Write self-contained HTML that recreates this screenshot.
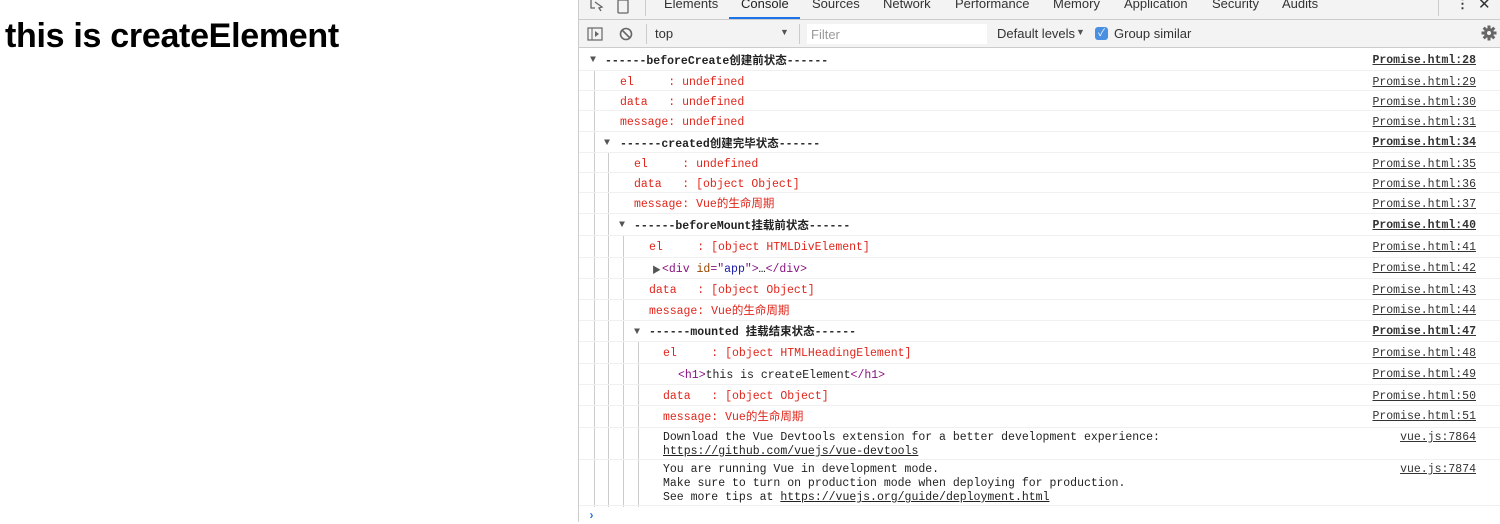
<!DOCTYPE html>
<html><head><meta charset="utf-8"><style>
*{margin:0;padding:0;box-sizing:border-box}
body{width:1500px;height:522px;overflow:hidden;background:#fff;position:relative;font-family:"Liberation Sans","Noto Sans CJK SC",sans-serif}
h1{position:absolute;left:5px;top:17px;font-size:34px;font-weight:bold;color:#000;letter-spacing:-0.3px}
#dt{position:absolute;left:578px;top:0;width:922px;height:522px;border-left:1px solid #ccc;background:#fff}
.tabs{position:absolute;left:0;top:0;width:922px;height:20px;background:#f3f3f3;border-bottom:1px solid #ccc}
.tab{position:absolute;top:-4px;font-size:13px;color:#333}
.tb{position:absolute;left:0;top:20px;width:922px;height:28px;background:#f3f3f3;border-bottom:1px solid #ccc;font-size:13px;color:#333}
.m{font-family:"Liberation Mono","Noto Sans CJK SC",monospace;font-size:11.5px}
.row{position:absolute;left:0;width:922px;border-bottom:1px solid #f0f0f0}
.t{position:absolute;white-space:pre;line-height:14px;margin-top:1px}
.r{color:#e0251b}
.b{font-weight:bold;color:#222}
.k{color:#222}
.lnk{position:absolute;right:25px;color:#333;text-decoration:underline;white-space:pre;line-height:14px;margin-top:1px}
.ar{position:absolute;font-size:10px;color:#555}
.g{position:absolute;width:1px;background:#ccc}
.tag{color:#881280}.at{color:#994500}.av{color:#1a1aa6}
</style></head><body>
<h1>this is createElement</h1>
<div id="dt">
<div class="tabs">
 <svg style="position:absolute;left:10px;top:-4px" width="16" height="16"><path d="M2 2v10h4M6 6l7 5-3 1 2 3" stroke="#666" fill="none" stroke-width="1.3"/></svg>
 <svg style="position:absolute;left:37px;top:-4px" width="14" height="18"><rect x="2" y="4" width="10" height="13" rx="1" stroke="#666" fill="none" stroke-width="1.3"/></svg>
 <div style="position:absolute;left:66px;top:0;width:1px;height:16px;background:#ccc"></div>
 <span class="tab" style="left:85px">Elements</span>
 <span class="tab" style="left:162px;color:#222">Console</span>
 <div style="position:absolute;left:150px;top:17px;width:71px;height:2px;background:#1a73e8"></div>
 <span class="tab" style="left:233px">Sources</span>
 <span class="tab" style="left:304px">Network</span>
 <span class="tab" style="left:376px">Performance</span>
 <span class="tab" style="left:474px">Memory</span>
 <span class="tab" style="left:545px">Application</span>
 <span class="tab" style="left:633px">Security</span>
 <span class="tab" style="left:703px">Audits</span>
 <div style="position:absolute;left:859px;top:0;width:1px;height:16px;background:#ccc"></div>
 <span class="tab" style="left:877px;font-weight:bold">⋮</span>
 <span class="tab" style="left:899px;font-size:15px;top:-5px">✕</span>
</div>
<div class="tb">
 <svg style="position:absolute;left:8px;top:7px" width="16" height="14"><rect x="1" y="1" width="14" height="12" stroke="#666" fill="none" stroke-width="1.2"/><path d="M5 1v12" stroke="#666"/><path d="M8 4l4 3-4 3z" fill="#666"/></svg>
 <svg style="position:absolute;left:40px;top:7px" width="14" height="14"><circle cx="7" cy="7" r="5.5" stroke="#666" fill="none" stroke-width="1.6"/><path d="M3 3l8 8" stroke="#666" stroke-width="1.6"/></svg>
 <div style="position:absolute;left:67px;top:4px;width:1px;height:20px;background:#ccc"></div>
 <span style="position:absolute;left:76px;top:6px">top</span>
 <span style="position:absolute;left:201px;top:7px;font-size:9px;color:#555">▼</span>
 <div style="position:absolute;left:220px;top:4px;width:1px;height:20px;background:#ccc"></div>
 <div style="position:absolute;left:228px;top:4px;width:180px;height:20px;background:#fff"></div>
 <span style="position:absolute;left:232px;top:7px;color:#999">Filter</span>
 <span style="position:absolute;left:418px;top:6px">Default levels</span>
 <span style="position:absolute;left:497px;top:7px;font-size:9px;color:#555">▼</span>
 <div style="position:absolute;left:516px;top:7px;width:13px;height:13px;border-radius:3px;background:#4a90e2;color:#fff;font-size:10px;line-height:13px;text-align:center">✓</div>
 <span style="position:absolute;left:535px;top:6px">Group similar</span>
 <svg style="position:absolute;left:902px;top:5px" width="16" height="16" viewBox="0 0 16 16"><g fill="#666"><circle cx="8" cy="8" r="5"/><rect x="6.5" y="0.5" width="3" height="15"/><rect x="0.5" y="6.5" width="15" height="3"/><rect x="6.5" y="0.5" width="3" height="15" transform="rotate(45 8 8)"/><rect x="6.5" y="0.5" width="3" height="15" transform="rotate(-45 8 8)"/></g><circle cx="8" cy="8" r="2" fill="#f3f3f3"/></svg>
</div>

<div class="g" style="left:15px;top:71px;height:436px"></div>
<div class="g" style="left:29px;top:153px;height:354px"></div>
<div class="g" style="left:44px;top:236px;height:271px"></div>
<div class="g" style="left:59px;top:342px;height:165px"></div>

<div class="m">
<div class="row" style="top:50px;height:21px"><span class="ar" style="left:11px;top:5px">▼</span><span class="t b" style="left:26px;top:4px">------beforeCreate创建前状态------</span><span class="lnk b" style="top:3px">Promise.html:28</span></div>
<div class="row" style="top:71px;height:20px"><span class="t r" style="left:41px;top:4px">el     : undefined</span><span class="lnk" style="top:4px">Promise.html:29</span></div>
<div class="row" style="top:91px;height:20px"><span class="t r" style="left:41px;top:4px">data   : undefined</span><span class="lnk" style="top:4px">Promise.html:30</span></div>
<div class="row" style="top:111px;height:21px"><span class="t r" style="left:41px;top:4px">message: undefined</span><span class="lnk" style="top:4px">Promise.html:31</span></div>
<div class="row" style="top:132px;height:21px"><span class="ar" style="left:25px;top:6px">▼</span><span class="t b" style="left:41px;top:5px">------created创建完毕状态------</span><span class="lnk b" style="top:3px">Promise.html:34</span></div>
<div class="row" style="top:153px;height:20px"><span class="t r" style="left:55px;top:4px">el     : undefined</span><span class="lnk" style="top:4px">Promise.html:35</span></div>
<div class="row" style="top:173px;height:20px"><span class="t r" style="left:55px;top:4px">data   : [object Object]</span><span class="lnk" style="top:4px">Promise.html:36</span></div>
<div class="row" style="top:193px;height:21px"><span class="t r" style="left:55px;top:4px">message: Vue的生命周期</span><span class="lnk" style="top:4px">Promise.html:37</span></div>
<div class="row" style="top:214px;height:22px"><span class="ar" style="left:40px;top:6px">▼</span><span class="t b" style="left:55px;top:5px">------beforeMount挂载前状态------</span><span class="lnk b" style="top:4px">Promise.html:40</span></div>
<div class="row" style="top:236px;height:22px"><span class="t r" style="left:70px;top:4px">el     : [object HTMLDivElement]</span><span class="lnk" style="top:4px">Promise.html:41</span></div>
<div class="row" style="top:258px;height:21px"><span class="ar" style="left:73px;top:5px;font-size:9px">▶</span><span class="t" style="left:83px;top:4px"><span class="tag">&lt;div</span> <span class="at">id</span><span class="tag">="</span><span class="av">app</span><span class="tag">"&gt;</span>…<span class="tag">&lt;/div&gt;</span></span><span class="lnk" style="top:3px">Promise.html:42</span></div>
<div class="row" style="top:279px;height:21px"><span class="t r" style="left:70px;top:4px">data   : [object Object]</span><span class="lnk" style="top:4px">Promise.html:43</span></div>
<div class="row" style="top:300px;height:21px"><span class="t r" style="left:70px;top:4px">message: Vue的生命周期</span><span class="lnk" style="top:3px">Promise.html:44</span></div>
<div class="row" style="top:321px;height:21px"><span class="ar" style="left:55px;top:6px">▼</span><span class="t b" style="left:70px;top:4px">------mounted 挂载结束状态------</span><span class="lnk b" style="top:3px">Promise.html:47</span></div>
<div class="row" style="top:342px;height:22px"><span class="t r" style="left:84px;top:4px">el     : [object HTMLHeadingElement]</span><span class="lnk" style="top:4px">Promise.html:48</span></div>
<div class="row" style="top:364px;height:21px"><span class="t k" style="left:99px;top:4px"><span class="tag">&lt;h1&gt;</span>this is createElement<span class="tag">&lt;/h1&gt;</span></span><span class="lnk" style="top:3px">Promise.html:49</span></div>
<div class="row" style="top:385px;height:21px"><span class="t r" style="left:84px;top:4px">data   : [object Object]</span><span class="lnk" style="top:4px">Promise.html:50</span></div>
<div class="row" style="top:406px;height:22px"><span class="t r" style="left:84px;top:4px">message: Vue的生命周期</span><span class="lnk" style="top:3px">Promise.html:51</span></div>
<div class="row" style="top:428px;height:32px"><span class="t k" style="left:84px;top:2px">Download the Vue Devtools extension for a better development experience:
<u>https://github.com/vuejs/vue-devtools</u></span><span class="lnk" style="top:2px">vue.js:7864</span></div>
<div class="row" style="top:460px;height:46px"><span class="t k" style="left:84px;top:2px">You are running Vue in development mode.
Make sure to turn on production mode when deploying for production.
See more tips at <u>https://vuejs.org/guide/deployment.html</u></span><span class="lnk" style="top:2px">vue.js:7874</span></div>
<span class="t" style="position:absolute;left:9px;top:509px;color:#1a73e8;font-weight:bold">›</span>
</div>
</div>
</body></html>
